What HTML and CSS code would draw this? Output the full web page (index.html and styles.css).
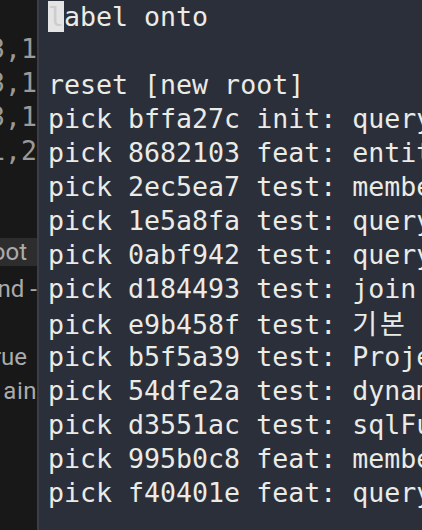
FILE: index.html
```html
<!DOCTYPE html>
<html>
<head>
<meta charset="utf-8">
<link rel="stylesheet" href="styles.css">
</head>
<body>
<div class="screen">
  <aside class="side">
    <div class="srow"></div>
    <div class="srow mono"><span>13,1</span></div>
    <div class="srow mono"><span>13,1</span></div>
    <div class="srow mono"><span>13,1</span></div>
    <div class="srow mono"><span>1,2</span></div>
    <div class="srow"></div>
    <div class="srow"></div>
    <div class="srow"><span class="hl"><span class="pad">root</span></span></div>
    <div class="srow"><span>command -</span></div>
    <div class="srow"></div>
    <div class="srow"><span class="pad">true</span></div>
    <div class="srow"><span class="tail">ain</span></div>
  </aside>
  <main class="term">
<div class="line"><span class="cursor">l</span>abel onto</div>
<div class="line"> </div>
<div class="line">reset [new root]</div>
<div class="line">pick bffa27c init: querydsl setup</div>
<div class="line">pick 8682103 feat: entity</div>
<div class="line">pick 2ec5ea7 test: member</div>
<div class="line">pick 1e5a8fa test: query</div>
<div class="line">pick 0abf942 test: query</div>
<div class="line">pick d184493 test: join</div>
<div class="line">pick e9b458f test: <span class="ko">기본</span> </div>
<div class="line">pick b5f5a39 test: Projection</div>
<div class="line">pick 54dfe2a test: dynamic</div>
<div class="line">pick d3551ac test: sqlFunction</div>
<div class="line">pick 995b0c8 feat: member</div>
<div class="line">pick f40401e feat: query</div>
  </main>
</div>
</body>
</html>
```
FILE: styles.css
```css
html, body {
  margin: 0;
  padding: 0;
  width: 422px;
  height: 530px;
  overflow: hidden;
  background: #2b2f3a;
}
.screen {
  display: flex;
  width: 422px;
  height: 530px;
}
.side {
  flex: 0 0 37px;
  width: 37px;
  background: #181818;
  border-right: 2px solid #3b3e48;
  display: flex;
  flex-direction: column;
  overflow: hidden;
}
.srow {
  height: 34px;
  flex: 0 0 34px;
  display: flex;
  justify-content: flex-end;
  align-items: center;
  white-space: pre;
  font-family: Roboto, sans-serif;
  font-size: 24px;
  color: #ababab;
}
.srow.mono {
  font-family: "DejaVu Sans Mono", monospace;
  font-size: 26.6px;
  color: #9a9a9a;
  margin-top: -3px;
  margin-bottom: 3px;
}
.srow .hl {
  align-self: flex-start;
  height: 28px;
  line-height: 28px;
  width: 100%;
  display: flex;
  justify-content: flex-end;
  background: #2d2d2d;
}
.pad {
  padding-right: 10px;
}
.tail {
  letter-spacing: 0.5px;
}
.term {
  flex: 1;
  padding-left: 9px;
  overflow: hidden;
  font-family: "DejaVu Sans Mono", "Noto Sans CJK KR", monospace;
  font-size: 26.6px;
  color: #ebebe6;
}
.line {
  height: 34px;
  line-height: 34px;
  white-space: pre;
}
.cursor {
  background: #e4e4e4;
  color: #cdcdcd;
}
.ko {
  font-family: "Noto Sans CJK KR", sans-serif;
  font-size: 27px;
  letter-spacing: 3px;
}
```
